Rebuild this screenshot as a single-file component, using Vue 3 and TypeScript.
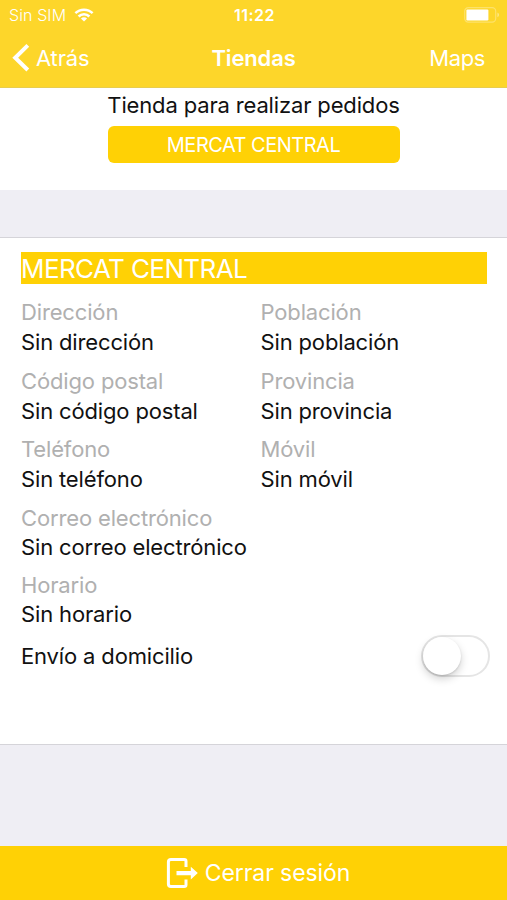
<script setup lang="ts">
import { ref } from 'vue'

interface Field {
  label: string
  value: string
}

const store = 'MERCAT CENTRAL'
const delivery = ref(false)

const rows: Field[][] = [
  [
    { label: 'Dirección', value: 'Sin dirección' },
    { label: 'Población', value: 'Sin población' },
  ],
  [
    { label: 'Código postal', value: 'Sin código postal' },
    { label: 'Provincia', value: 'Sin provincia' },
  ],
  [
    { label: 'Teléfono', value: 'Sin teléfono' },
    { label: 'Móvil', value: 'Sin móvil' },
  ],
  [{ label: 'Correo electrónico', value: 'Sin correo electrónico' }],
  [{ label: 'Horario', value: 'Sin horario' }],
]
</script>

<template>
  <div class="screen">
    <header class="top">
      <div class="status">
        <div class="carrier">
          <span>Sin SIM</span>
          <svg class="wifi" width="20" height="14" viewBox="0 0 20 14">
            <g fill="none" stroke="#fff" stroke-width="2.5">
              <path d="M1.4 5.2a12.2 12.2 0 0 1 17.2 0" />
              <path d="M4.6 8.5a7.6 7.6 0 0 1 10.8 0" />
            </g>
            <path d="M10 13.6L6.9 10.5a4.4 4.4 0 0 1 6.2 0z" fill="#fff" />
          </svg>
        </div>
        <span class="time">11:22</span>
        <svg class="battery" width="36" height="16" viewBox="0 0 36 16">
          <rect x="0.7" y="0.7" width="31" height="14.4" rx="3.6" fill="none" stroke="#fff" stroke-opacity=".3" stroke-width="1.2" />
          <rect x="2.4" y="2.4" width="22" height="11" rx="1.2" fill="#fff" />
          <path d="M33.4 5.6c2.2.8 2.2 3.8 0 4.6z" fill="#fff" fill-opacity=".4" />
        </svg>
      </div>
      <nav class="nav">
        <a class="back">
          <svg width="18" height="30" viewBox="0 0 18 30">
            <path d="M15.8 2.4L3.2 14.7l12.6 12.3" fill="none" stroke="#fff" stroke-width="4" />
          </svg>
          <span>Atrás</span>
        </a>
        <h1>Tiendas</h1>
        <a class="maps">Maps</a>
      </nav>
    </header>

    <section class="picker">
      <p>Tienda para realizar pedidos</p>
      <button type="button">{{ store }}</button>
    </section>

    <section class="card">
      <h2>{{ store }}</h2>
      <div v-for="(row, i) in rows" :key="i" class="row" :class="{ single: row.length === 1 }">
        <div v-for="field in row" :key="field.label" class="field">
          <div class="label">{{ field.label }}</div>
          <div class="value">{{ field.value }}</div>
        </div>
      </div>
      <div class="delivery">
        <span>Envío a domicilio</span>
        <button type="button" class="switch" :class="{ on: delivery }" @click="delivery = !delivery">
          <span class="knob"></span>
        </button>
      </div>
    </section>

    <footer class="logout">
      <svg width="32" height="32" viewBox="0 0 32 32">
        <path d="M20 10V4.2Q20 2.4 18.2 2.4H5Q2.4 2.4 2.4 5v22Q2.4 29.6 5 29.6h13.2q1.8 0 1.8-1.8v-5.3" fill="none" stroke="#fff" stroke-width="3" />
        <path d="M10.5 14h14.3V9.8l7 6.3-7 6.3V18.2H10.5z" fill="#fff" />
      </svg>
      <span>Cerrar sesión</span>
    </footer>
  </div>
</template>

<style>
body {
  margin: 0;
}
</style>

<style scoped>
.screen {
  display: flex;
  flex-direction: column;
  box-sizing: border-box;
  width: 507px;
  height: 900px;
  overflow: hidden;
  background: #efeef4;
  color: #111;
  font-family: Inter, "Liberation Sans", sans-serif;
  font-size: 22px;
  line-height: 30px;
  letter-spacing: -0.15px;
}
h1,
h2,
p {
  margin: 0;
}
button {
  border: 0;
  padding: 0;
  font: inherit;
  letter-spacing: inherit;
}
.top {
  box-sizing: border-box;
  height: 88px;
  background: #fdd62a;
  border-bottom: 1px solid #e8cd4e;
  color: #fff;
}
.status {
  display: grid;
  grid-template-columns: 1fr auto 1fr;
  align-items: center;
  height: 30px;
  padding: 0 7px 0 9px;
  font-size: 16px;
  line-height: 20px;
}
.carrier {
  display: flex;
  align-items: center;
  gap: 8px;
  font-weight: 300;
  letter-spacing: 0.1px;
}
.time {
  font-size: 16px;
  font-weight: 600;
  letter-spacing: 0.5px;
}
.battery {
  justify-self: end;
}
.nav {
  display: grid;
  grid-template-columns: 1fr auto 1fr;
  align-items: center;
  height: 56px;
  padding: 0 22px;
}
.back {
  display: flex;
  align-items: center;
  gap: 6px;
  margin-left: -10px;
}
.nav h1 {
  font-size: 22px;
  font-weight: 600;
}
.maps {
  justify-self: end;
  letter-spacing: -0.4px;
}
.picker {
  display: flex;
  flex-direction: column;
  align-items: center;
  box-sizing: border-box;
  height: 102px;
  padding-top: 2px;
  background: #fff;
}
.picker button {
  width: 292px;
  height: 37px;
  margin-top: 6px;
  border-radius: 6px;
  background: #ffd105;
  color: #fff;
  font-size: 20px;
  letter-spacing: -0.5px;
}
.card {
  box-sizing: border-box;
  height: 508px;
  margin-top: 47px;
  padding: 14px 20px 0 21px;
  background: #fff;
  border-top: 1px solid #d5d4d9;
  border-bottom: 1px solid #d5d4d9;
}
.card h2 {
  height: 32px;
  margin-bottom: 13px;
  background: #ffd105;
  color: #fff;
  font-size: 26px;
  font-weight: 400;
  line-height: 33px;
  letter-spacing: -0.6px;
}
.row {
  display: grid;
  grid-template-columns: 239.5px 1fr;
  height: 68.5px;
}
.row.single {
  height: 67.5px;
}
.single .value {
  line-height: 29px;
}
.label {
  color: #b0b0b0;
}
.delivery {
  display: flex;
  align-items: center;
  justify-content: space-between;
  height: 42px;
  margin: -2.5px -3px 0 0;
}
.switch {
  display: flex;
  box-sizing: border-box;
  width: 69px;
  height: 42px;
  border: 2px solid #e5e5e5;
  border-radius: 21px;
  background: #fff;
}
.switch.on {
  justify-content: flex-end;
  background: #ffd105;
}
.knob {
  width: 38px;
  height: 38px;
  border-radius: 50%;
  background: #fff;
  box-shadow: 0 4px 9px rgba(0, 0, 0, 0.18), 0 1px 2px rgba(0, 0, 0, 0.12);
}
.logout {
  display: flex;
  align-items: center;
  justify-content: center;
  gap: 7px;
  height: 54px;
  margin-top: auto;
  padding-left: 9px;
  background: #ffd105;
  color: #fff;
  font-size: 23px;
  letter-spacing: -0.1px;
}
</style>
